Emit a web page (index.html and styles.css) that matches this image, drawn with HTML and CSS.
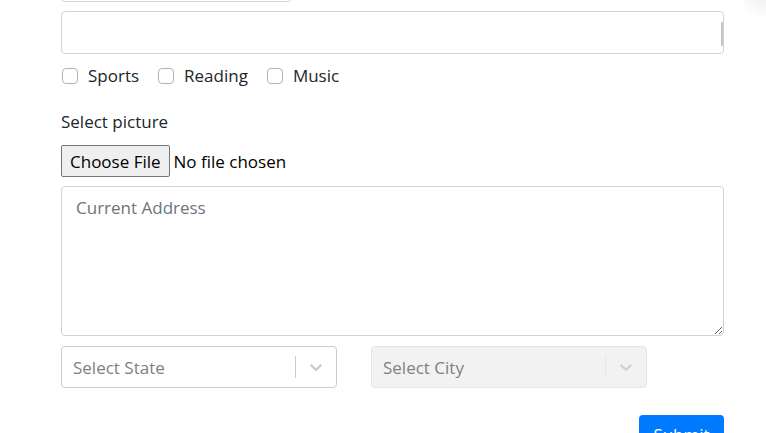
FILE: index.html
```html
<!DOCTYPE html>
<html>
<head>
<meta charset="utf-8">
<link rel="stylesheet" href="styles.css">
</head>
<body>
<div class="shade"></div>
<form class="form">
  <div class="date-input"></div>
  <div class="subjects"><span class="subjects-bar"></span></div>
  <div class="hobbies">
    <label class="hobby"><input type="checkbox" class="check"><span>Sports</span></label>
    <label class="hobby"><input type="checkbox" class="check"><span>Reading</span></label>
    <label class="hobby"><input type="checkbox" class="check"><span>Music</span></label>
  </div>
  <div class="pic-label">Select picture</div>
  <div class="file-row"><input type="file" class="file"></div>
  <textarea class="address" placeholder="Current Address"></textarea>
  <div class="selects">
    <div class="select">
      <span class="placeholder">Select State</span>
      <span class="indicators"><span class="sep"></span><span class="chev"><svg viewBox="0 0 20 20" width="20" height="20"><path d="M4.516 7.548c0.436-0.446 1.043-0.481 1.576 0l3.908 3.747 3.908-3.747c0.533-0.481 1.141-0.446 1.574 0 0.436 0.445 0.408 1.197 0 1.615-0.406 0.418-4.695 4.502-4.695 4.502-0.217 0.223-0.502 0.335-0.787 0.335s-0.57-0.112-0.789-0.335c0 0-4.287-4.084-4.695-4.502s-0.436-1.170 0-1.615z"/></svg></span></span>
    </div>
    <div class="select disabled">
      <span class="placeholder">Select City</span>
      <span class="indicators"><span class="sep"></span><span class="chev"><svg viewBox="0 0 20 20" width="20" height="20"><path d="M4.516 7.548c0.436-0.446 1.043-0.481 1.576 0l3.908 3.747 3.908-3.747c0.533-0.481 1.141-0.446 1.574 0 0.436 0.445 0.408 1.197 0 1.615-0.406 0.418-4.695 4.502-4.695 4.502-0.217 0.223-0.502 0.335-0.787 0.335s-0.57-0.112-0.789-0.335c0 0-4.287-4.084-4.695-4.502s-0.436-1.170 0-1.615z"/></svg></span></span>
    </div>
  </div>
  <div class="submit-row"><button type="button" class="submit">Submit</button></div>
</form>
</body>
</html>
```
FILE: styles.css
```css
* { box-sizing: border-box; }
html, body { margin: 0; padding: 0; background: #fff; overflow: hidden; }
body {
  font-family: "Open Sans", "Noto Sans", sans-serif;
  font-size: 17px;
  color: #212529;
  width: 766px;
  height: 433px;
  position: relative;
}
.shade {
  position: absolute;
  right: -14px;
  top: -22px;
  width: 44px;
  height: 44px;
  background: radial-gradient(circle at 65% 35%, rgba(0,0,0,0.07), rgba(0,0,0,0) 65%);
}
.form {
  margin: 0 0 0 61px;
  width: 663px;
  display: flex;
  flex-direction: column;
}
.date-input {
  width: 231px;
  height: 38px;
  margin-top: -36px;
  border: 1px solid #ced4da;
  border-radius: 4px;
}
.subjects {
  margin-top: 9px;
  height: 43px;
  border: 1px solid #ced4da;
  border-radius: 4px;
  position: relative;
}
.subjects-bar {
  position: absolute;
  right: 0;
  top: 10px;
  width: 2px;
  height: 24px;
  background: #c6c6c6;
}
.hobbies {
  margin-top: 10px;
  height: 24px;
  display: flex;
  align-items: center;
}
.hobby {
  display: flex;
  align-items: center;
  margin-right: 18px;
  line-height: 24px;
}
.check {
  appearance: none;
  -webkit-appearance: none;
  margin: 0 10px 0 1px;
  width: 16px;
  height: 16px;
  border: 1px solid #adb5bd;
  border-radius: 4px;
  background: #fff;
}
.pic-label {
  margin-top: 22px;
  line-height: 24px;
}
.file-row {
  margin-top: 11px;
  height: 32px;
  display: flex;
  align-items: center;
}
.file {
  font-family: "Open Sans", "Noto Sans", sans-serif;
  font-size: 17px;
  color: #000;
}
.file::file-selector-button {
  font-family: "Open Sans", "Noto Sans", sans-serif;
  font-size: 17px;
  height: 32px;
  padding: 0 8px;
  margin-right: 4px;
  border: 1px solid #767676;
  border-radius: 2px;
  background: #efefef;
  color: #000;
}
.address {
  margin-top: 9px;
  height: 150px;
  width: 663px;
  border: 1px solid #ced4da;
  border-radius: 4px;
  padding: 9px 14px;
  font-family: "Open Sans", "Noto Sans", sans-serif;
  font-size: 17px;
  line-height: 24px;
  resize: vertical;
}
.address::placeholder { color: #6c757d; }
.selects {
  margin-top: 10px;
  display: flex;
  gap: 34px;
}
.select {
  width: 276px;
  height: 42px;
  border: 1px solid #ccc;
  border-radius: 4px;
  display: flex;
  align-items: center;
  justify-content: space-between;
  padding-left: 11px;
  background: #fff;
}
.select.disabled {
  background: #f2f2f2;
  border-color: #e6e6e6;
}
.placeholder { color: #808080; }
.indicators {
  display: flex;
  align-items: center;
  align-self: stretch;
}
.sep {
  width: 1px;
  height: 22px;
  background: #ccc;
}
.disabled .sep { background: #e6e6e6; }
.chev {
  padding: 8px 10px 8px 10px;
  display: flex;
}
.chev svg { fill: #ccc; }
.disabled .chev svg { fill: #d3d3d3; }
.submit-row {
  margin-top: 27px;
  display: flex;
  justify-content: flex-end;
}
.submit {
  width: 85px;
  height: 38px;
  border: none;
  border-radius: 4px;
  background: #007bff;
  color: #fff;
  font-family: "Open Sans", "Noto Sans", sans-serif;
  font-size: 17px;
  padding: 6px 12px;
}
```
